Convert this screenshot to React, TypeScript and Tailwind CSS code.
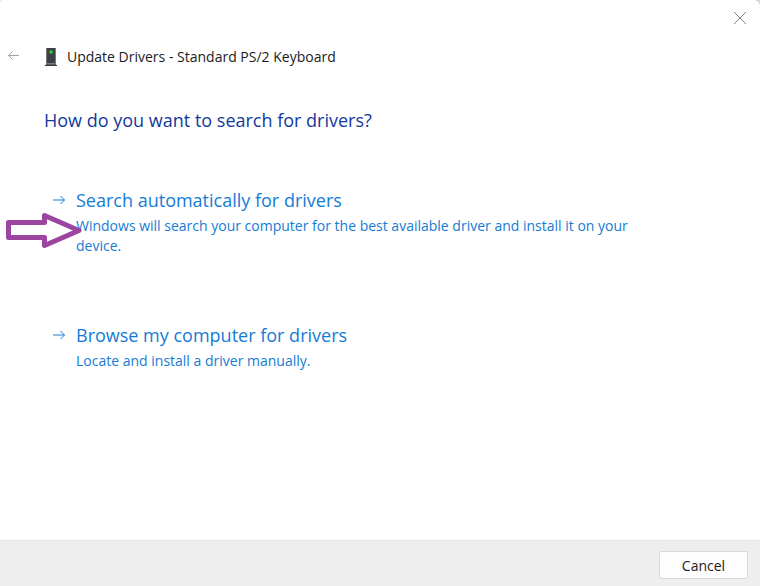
import { useState } from 'react'

interface SearchOption {
  id: string
  title: string
  description: string
}

const options: SearchOption[] = [
  {
    id: 'auto',
    title: 'Search automatically for drivers',
    description:
      'Windows will search your computer for the best available driver and install it on your device.',
  },
  {
    id: 'browse',
    title: 'Browse my computer for drivers',
    description: 'Locate and install a driver manually.',
  },
]

function ArrowRight() {
  return (
    <svg viewBox="0 0 12 10" className="w-3 shrink-0" fill="none" stroke="currentColor" aria-hidden="true">
      <path d="M0 5h11.500M7.500 1l4 4-4 4" />
    </svg>
  )
}

function DeviceIcon() {
  return (
    <svg viewBox="0 0 12 20" className="h-5 w-3 shrink-0" aria-hidden="true">
      <path d="M1 1h10v15.500H1z" fill="#3d4145" />
      <path d="M1 1h1v15.500H1zM10 1h1v15.500h-1z" fill="#777b7f" />
      <path d="M1.500 16.500h9L12 19H0z" fill="#5b5f63" />
      <path d="M0 18h12v1H0z" fill="#34383b" />
      <circle cx="6" cy="5" r="1.700" fill="#1fe02a" />
    </svg>
  )
}

// Marker that points at the recommended option
function Pointer() {
  return (
    <svg
      viewBox="0 0 78 38"
      className="pointer-events-none absolute top-6 left-1 h-[38px] w-[78px]"
      fill="none"
      stroke="#9c45a0"
      strokeWidth="5"
      strokeLinejoin="round"
      aria-hidden="true"
    >
      <path d="M4.500 10.500H40.500V3.500L75 18.500 40.500 33.500V25.500H4.500z" />
    </svg>
  )
}

export default function App() {
  const [selected, setSelected] = useState('auto')

  return (
    <div className="bg-[#d4d4d4] font-['Open_Sans','Noto_Sans',sans-serif] text-[#1b1b1b]">
      <div className="flex min-h-screen flex-col overflow-hidden rounded-tl-xs rounded-tr-md bg-white">
        <div className="flex h-9 items-center justify-end px-2">
          <button type="button" aria-label="Close" className="p-1 text-[#858585]">
            <svg viewBox="0 0 16 16" className="size-4" fill="none" stroke="currentColor">
              <path d="M2 2l12 12M14 2L2 14" />
            </svg>
          </button>
        </div>

        <header className="flex h-[42px] items-center px-2">
          <button type="button" aria-label="Back" className="mr-[25px] text-[#a0a0a0]">
            <svg viewBox="0 0 12 12" className="w-3" fill="none" stroke="currentColor">
              <path d="M11 4.500H.500M4.500 .500l-4 4 4 4" />
            </svg>
          </button>
          <DeviceIcon />
          <h1 className="ml-2.5 text-sm">Update Drivers - Standard PS/2 Keyboard</h1>
        </header>

        <main className="flex-1">
          <h2 className="mt-[30px] px-11 text-lg leading-6 text-[#12399b]">
            How do you want to search for drivers?
          </h2>

          <div className="mt-14 flex flex-col gap-[67px]">
            {options.map((option) => (
              <div key={option.id} className="relative pr-28 pl-[53px]">
                <button
                  type="button"
                  aria-pressed={selected === option.id}
                  onClick={() => setSelected(option.id)}
                  className="block w-full text-left text-[#147cd5]"
                >
                  <span className="flex items-center gap-[11px] text-lg leading-6">
                    <ArrowRight />
                    {option.title}
                  </span>
                  <span className="mt-1 block pl-[23px] text-sm leading-5">{option.description}</span>
                </button>
                {option.id === 'auto' && <Pointer />}
              </div>
            ))}
          </div>
        </main>

        <footer className="flex justify-end border-t border-[#e4e4e4] bg-[#eeeeee] px-3 pt-2.5 pb-[7px]">
          <button
            type="button"
            className="h-7 w-[89px] rounded-xs border border-[#d8d8d8] bg-[#fdfdfd] pt-0.5 text-sm leading-5"
          >
            Cancel
          </button>
        </footer>
      </div>
    </div>
  )
}
